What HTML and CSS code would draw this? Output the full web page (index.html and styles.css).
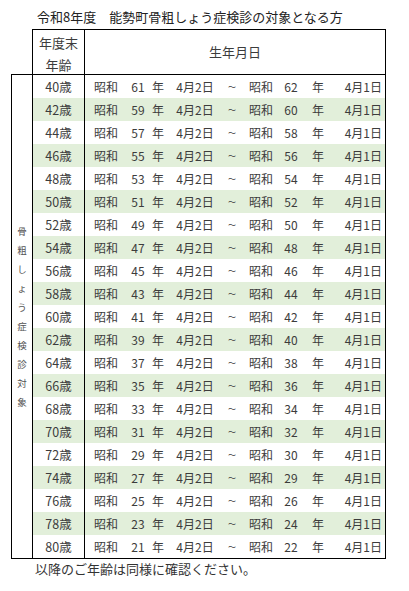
FILE: index.html
```html
<!DOCTYPE html>
<html lang="ja">
<head>
<meta charset="utf-8">
<link rel="stylesheet" href="styles.css">
</head>
<body>
<div class="page">
  <h1 class="title">令和8年度　能勢町骨粗しょう症検診の対象となる方</h1>
  <div class="table">
    <div class="head">
      <div class="h-age">年度末<br>年齢</div>
      <div class="h-date">生年月日</div>
    </div>
    <div class="body">
      <div class="side"><span class="side-text">骨粗しょう症検診対象</span></div>
      <div class="rows">
        <div class="row"><div class="age">40歳</div><div class="data"><span class="c1">昭和</span><span class="c2">61</span><span class="c3">年</span><span class="c4">4月2日</span><span class="c5">～</span><span class="c6">昭和</span><span class="c7">62</span><span class="c8">年</span><span class="c9">4月1日</span></div></div>
        <div class="row alt"><div class="age">42歳</div><div class="data"><span class="c1">昭和</span><span class="c2">59</span><span class="c3">年</span><span class="c4">4月2日</span><span class="c5">～</span><span class="c6">昭和</span><span class="c7">60</span><span class="c8">年</span><span class="c9">4月1日</span></div></div>
        <div class="row"><div class="age">44歳</div><div class="data"><span class="c1">昭和</span><span class="c2">57</span><span class="c3">年</span><span class="c4">4月2日</span><span class="c5">～</span><span class="c6">昭和</span><span class="c7">58</span><span class="c8">年</span><span class="c9">4月1日</span></div></div>
        <div class="row alt"><div class="age">46歳</div><div class="data"><span class="c1">昭和</span><span class="c2">55</span><span class="c3">年</span><span class="c4">4月2日</span><span class="c5">～</span><span class="c6">昭和</span><span class="c7">56</span><span class="c8">年</span><span class="c9">4月1日</span></div></div>
        <div class="row"><div class="age">48歳</div><div class="data"><span class="c1">昭和</span><span class="c2">53</span><span class="c3">年</span><span class="c4">4月2日</span><span class="c5">～</span><span class="c6">昭和</span><span class="c7">54</span><span class="c8">年</span><span class="c9">4月1日</span></div></div>
        <div class="row alt"><div class="age">50歳</div><div class="data"><span class="c1">昭和</span><span class="c2">51</span><span class="c3">年</span><span class="c4">4月2日</span><span class="c5">～</span><span class="c6">昭和</span><span class="c7">52</span><span class="c8">年</span><span class="c9">4月1日</span></div></div>
        <div class="row"><div class="age">52歳</div><div class="data"><span class="c1">昭和</span><span class="c2">49</span><span class="c3">年</span><span class="c4">4月2日</span><span class="c5">～</span><span class="c6">昭和</span><span class="c7">50</span><span class="c8">年</span><span class="c9">4月1日</span></div></div>
        <div class="row alt"><div class="age">54歳</div><div class="data"><span class="c1">昭和</span><span class="c2">47</span><span class="c3">年</span><span class="c4">4月2日</span><span class="c5">～</span><span class="c6">昭和</span><span class="c7">48</span><span class="c8">年</span><span class="c9">4月1日</span></div></div>
        <div class="row"><div class="age">56歳</div><div class="data"><span class="c1">昭和</span><span class="c2">45</span><span class="c3">年</span><span class="c4">4月2日</span><span class="c5">～</span><span class="c6">昭和</span><span class="c7">46</span><span class="c8">年</span><span class="c9">4月1日</span></div></div>
        <div class="row alt"><div class="age">58歳</div><div class="data"><span class="c1">昭和</span><span class="c2">43</span><span class="c3">年</span><span class="c4">4月2日</span><span class="c5">～</span><span class="c6">昭和</span><span class="c7">44</span><span class="c8">年</span><span class="c9">4月1日</span></div></div>
        <div class="row"><div class="age">60歳</div><div class="data"><span class="c1">昭和</span><span class="c2">41</span><span class="c3">年</span><span class="c4">4月2日</span><span class="c5">～</span><span class="c6">昭和</span><span class="c7">42</span><span class="c8">年</span><span class="c9">4月1日</span></div></div>
        <div class="row alt"><div class="age">62歳</div><div class="data"><span class="c1">昭和</span><span class="c2">39</span><span class="c3">年</span><span class="c4">4月2日</span><span class="c5">～</span><span class="c6">昭和</span><span class="c7">40</span><span class="c8">年</span><span class="c9">4月1日</span></div></div>
        <div class="row"><div class="age">64歳</div><div class="data"><span class="c1">昭和</span><span class="c2">37</span><span class="c3">年</span><span class="c4">4月2日</span><span class="c5">～</span><span class="c6">昭和</span><span class="c7">38</span><span class="c8">年</span><span class="c9">4月1日</span></div></div>
        <div class="row alt"><div class="age">66歳</div><div class="data"><span class="c1">昭和</span><span class="c2">35</span><span class="c3">年</span><span class="c4">4月2日</span><span class="c5">～</span><span class="c6">昭和</span><span class="c7">36</span><span class="c8">年</span><span class="c9">4月1日</span></div></div>
        <div class="row"><div class="age">68歳</div><div class="data"><span class="c1">昭和</span><span class="c2">33</span><span class="c3">年</span><span class="c4">4月2日</span><span class="c5">～</span><span class="c6">昭和</span><span class="c7">34</span><span class="c8">年</span><span class="c9">4月1日</span></div></div>
        <div class="row alt"><div class="age">70歳</div><div class="data"><span class="c1">昭和</span><span class="c2">31</span><span class="c3">年</span><span class="c4">4月2日</span><span class="c5">～</span><span class="c6">昭和</span><span class="c7">32</span><span class="c8">年</span><span class="c9">4月1日</span></div></div>
        <div class="row"><div class="age">72歳</div><div class="data"><span class="c1">昭和</span><span class="c2">29</span><span class="c3">年</span><span class="c4">4月2日</span><span class="c5">～</span><span class="c6">昭和</span><span class="c7">30</span><span class="c8">年</span><span class="c9">4月1日</span></div></div>
        <div class="row alt"><div class="age">74歳</div><div class="data"><span class="c1">昭和</span><span class="c2">27</span><span class="c3">年</span><span class="c4">4月2日</span><span class="c5">～</span><span class="c6">昭和</span><span class="c7">29</span><span class="c8">年</span><span class="c9">4月1日</span></div></div>
        <div class="row"><div class="age">76歳</div><div class="data"><span class="c1">昭和</span><span class="c2">25</span><span class="c3">年</span><span class="c4">4月2日</span><span class="c5">～</span><span class="c6">昭和</span><span class="c7">26</span><span class="c8">年</span><span class="c9">4月1日</span></div></div>
        <div class="row alt"><div class="age">78歳</div><div class="data"><span class="c1">昭和</span><span class="c2">23</span><span class="c3">年</span><span class="c4">4月2日</span><span class="c5">～</span><span class="c6">昭和</span><span class="c7">24</span><span class="c8">年</span><span class="c9">4月1日</span></div></div>
        <div class="row"><div class="age">80歳</div><div class="data"><span class="c1">昭和</span><span class="c2">21</span><span class="c3">年</span><span class="c4">4月2日</span><span class="c5">～</span><span class="c6">昭和</span><span class="c7">22</span><span class="c8">年</span><span class="c9">4月1日</span></div></div>
      </div>
    </div>
  </div>
  <p class="note">以降のご年齢は同様に確認ください。</p>
</div>
</body>
</html>
```
FILE: styles.css
```css
* { box-sizing: border-box; }
html, body {
  margin: 0;
  padding: 0;
  background: #fff;
}
body {
  font-family: "Noto Sans CJK JP", "Noto Sans", sans-serif;
  color: #3c3c3c;
}
.page {
  width: 409px;
  height: 591px;
  padding: 8px 0 0 11px;
}
.title {
  margin: 0 0 3px 26px;
  font-size: 13px;
  font-weight: normal;
  line-height: 18px;
  color: #222;
  white-space: nowrap;
}
.table {
  width: 375px;
}
.head {
  display: flex;
  margin-left: 21px;
  height: 45px;
  border: 1px solid #000;
  border-bottom: none;
  font-size: 13px;
}
.h-age {
  width: 52px;
  border-right: 1px solid #000;
  text-align: center;
  line-height: 22px;
  padding-top: 2px;
}
.h-date {
  flex: 1;
  display: flex;
  align-items: center;
  justify-content: center;
  padding-bottom: 2px;
}
.body {
  display: flex;
  border: 1px solid #000;
}
.side {
  width: 21px;
  border-right: 1px solid #000;
  display: flex;
  align-items: center;
  justify-content: center;
}
.side-text {
  display: block;
  width: 10px;
  font-size: 9.5px;
  line-height: 19px;
  text-align: center;
  color: #555;
  word-break: break-all;
  line-break: anywhere;
}
.rows {
  flex: 1;
}
.row {
  display: flex;
  height: 23px;
  font-size: 12px;
  line-height: 23px;
}
.age {
  width: 52px;
  border-right: 1px solid #000;
  text-align: center;
  font-size: 12.5px;
}
.data {
  flex: 1;
  display: flex;
  white-space: nowrap;
}
.alt .age, .alt .data {
  background: #e2efda;
}
.data span { text-align: center; }
.c1 { width: 43px; text-align: left !important; padding-left: 9px; }
.c2 { width: 20px; }
.c3 { width: 20px; }
.c4 { width: 54px; }
.c5 { width: 20px; font-size: 8px; }
.c6 { width: 38px; }
.c7 { width: 22px; }
.c8 { width: 32px; }
.c9 { width: 51px; text-align: right !important; padding-right: 3px; }
.note {
  margin: 0 0 0 24px;
  font-size: 13px;
  line-height: 20px;
  color: #333;
}
```
